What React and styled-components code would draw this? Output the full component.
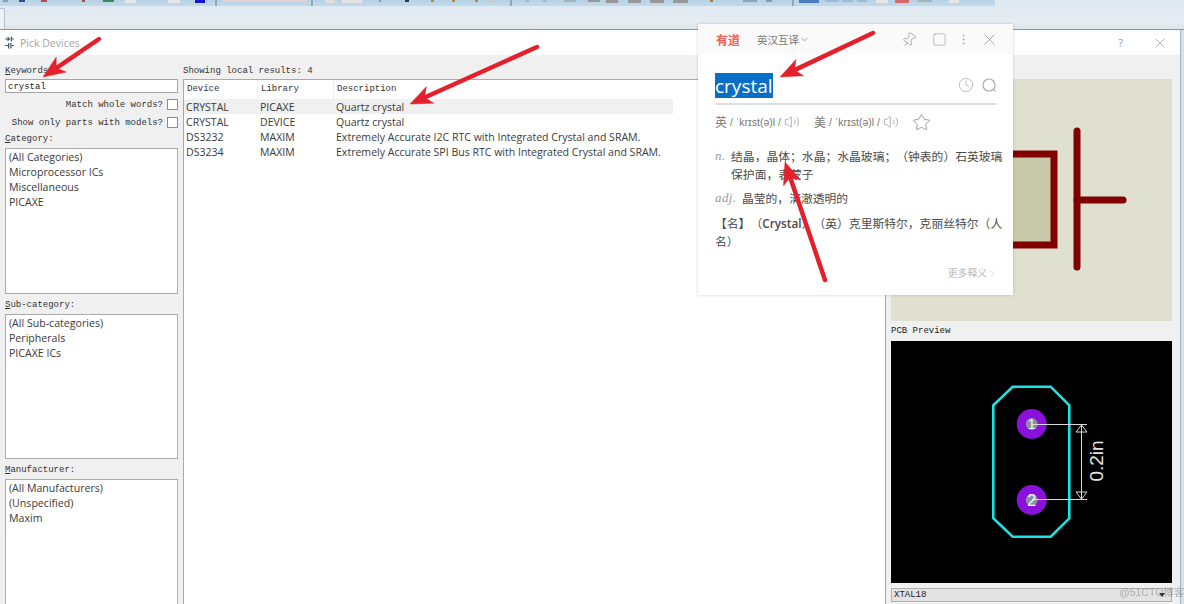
import React from "react";
import styled, { createGlobalStyle } from "styled-components";
import { ChevronDown, ChevronRight, Clock, EllipsisVertical, Pin, Square, Star, Volume2, X } from "lucide-react";

const GlobalStyle = createGlobalStyle`
  html, body { margin: 0; padding: 0; background: #d9dfe4; }
  * { box-sizing: border-box; }
`;

const ui = `"Open Sans", "Noto Sans CJK SC", sans-serif`;
const mono = `"Liberation Mono", monospace`;

const Page = styled.div`
  position: relative;
  width: 1184px;
  height: 604px;
  overflow: hidden;
  display: flex;
  flex-direction: column;
  font-family: ${ui};
  filter: blur(0.3px);
`;

/* the app toolbar, only its bottom few pixels are on screen */
const Toolbar = styled.div`
  height: 6px;
  flex: none;
  display: flex;
  background: #dfe9f1;
`;
const ToolStrip = styled.div`
  width: 995px;
  height: 6px;
  display: flex;
  align-items: flex-start;
  background: linear-gradient(180deg, #b6d1e5, #c3dbeb);
`;
const Chip = styled.span`
  flex: none;
  width: ${p => p.$w}px;
  height: ${p => p.$h || 2}px;
  margin-left: ${p => p.$gap}px;
  background: ${p => p.$c};
`;

const TabBand = styled.div`
  height: 24px;
  flex: none;
  padding-top: 2px;
  background: linear-gradient(180deg, #dfe9f1, #e6edf3 70%, #dbe5ec);
  border-bottom: 1px solid #7d9cb3;
`;
const DocTab = styled.div`
  width: 5px;
  height: 21px;
  background: #edf2f6;
  border: 1px solid #b3c0cb;
  border-left: 0;
  border-bottom: 0;
  border-top-right-radius: 2px;
`;

const Dialog = styled.div`
  flex: 1;
  min-height: 0;
  margin-right: 3px;
  display: flex;
  flex-direction: column;
  background: #f0f0f0;
  border-right: 1px solid #9fb3c3;
`;
const TitleBar = styled.div`
  height: 25px;
  flex: none;
  display: flex;
  align-items: center;
  padding: 0 12px 0 5px;
  background: #fff;
`;
const DialogName = styled.span`
  margin-left: 6px;
  font-size: 10.5px;
  color: #a4a4a4;
`;
const TitleRight = styled.div`
  margin-left: auto;
  display: flex;
  align-items: center;
  gap: 29px;
  color: #999;
`;
const HelpMark = styled.span`
  font-size: 11px;
  color: #999;
`;

const DialogBody = styled.div`
  flex: 1;
  min-height: 0;
  display: flex;
  overflow: hidden;
`;

const LeftColumn = styled.div`
  width: 173px;
  margin-left: 5px;
  padding-top: 9px;
  flex: none;
`;
const FieldLabel = styled.div`
  height: 12px;
  font: 9px/14px ${mono};
  color: #333;
`;
const KeywordInput = styled.div`
  height: 14px;
  margin-top: 3px;
  padding-left: 2px;
  background: #fff;
  border: 1px solid #a5a5a5;
  font: 9px/14px ${mono};
  color: #222;
`;
const OptionRows = styled.div`
  margin: 2px 0 1px;
`;
const OptionRow = styled.div`
  height: 18px;
  display: flex;
  align-items: center;
  justify-content: flex-end;
  gap: 4px;
`;
const OptionText = styled.span`
  padding-top: 2px;
  font: 9px/14px ${mono};
  color: #333;
`;
const CheckBox = styled.span`
  width: 11px;
  height: 11px;
  background: #fff;
  border: 1px solid #8e8e8e;
`;
const ListBox = styled.div`
  height: ${p => p.$h}px;
  margin: 4px 0;
  padding: 1px 0 0 3px;
  background: #fff;
  border: 1px solid #ababab;
`;
const ListItem = styled.div`
  height: 15px;
  font-size: 10.6px;
  line-height: 15px;
  color: #3a3a3a;
  white-space: nowrap;
`;

const ResultsColumn = styled.div`
  width: 703px;
  margin-left: 5px;
  padding-top: 9px;
  flex: none;
  display: flex;
  flex-direction: column;
`;
const ResultsFrame = styled.div`
  flex: 1;
  margin-top: 3px;
  background: #fff;
  border: 1px solid #a9a9a9;
  border-bottom: 0;
`;
const HeaderRow = styled.div`
  height: 19px;
  display: grid;
  grid-template-columns: 74px 76px 339px;
  width: 489px;
`;
const HeaderCell = styled.div`
  padding-left: 3px;
  font: 9px/19px ${mono};
  color: #333;
  border-right: 1px solid #ececec;
  &:last-child { border-right: 0; }
`;
const ResultRow = styled.div`
  height: 15px;
  width: 489px;
  display: grid;
  grid-template-columns: 74px 76px 339px;
  background: ${p => (p.$active ? "#f0f0f0" : "transparent")};
`;
const ResultCell = styled.div`
  padding-left: 2px;
  font-size: 10.55px;
  line-height: 16px;
  color: #3a3a3a;
  white-space: nowrap;
`;

const PreviewColumn = styled.div`
  width: 281px;
  margin-left: 5px;
  padding-top: 24px;
  flex: none;
`;
const SchematicBox = styled.div`
  height: 242px;
  background: #e0e0d1;
`;
const PcbLabel = styled.div`
  height: 20px;
  font: 9px/21px ${mono};
  color: #222;
`;
const PcbBox = styled.div`
  height: 242px;
  background: #000;
`;
const PackageSelect = styled.div`
  height: 14px;
  margin-top: 5px;
  padding: 0 6px 0 2px;
  display: flex;
  align-items: center;
  justify-content: space-between;
  background: #e3e3e3;
  border: 1px solid #b0b0b0;
  font: 9px/14px ${mono};
  color: #222;
`;
const SelectCaret = styled.span`
  width: 0;
  height: 0;
  border-left: 3px solid transparent;
  border-right: 3px solid transparent;
  border-top: 4px solid #222;
`;
const Drawing = styled.svg`
  display: block;
`;

/* dictionary popup floats over the dialog */
const Popup = styled.div`
  position: absolute;
  left: 698px;
  top: 24px;
  width: 315px;
  height: 271px;
  background: #fff;
  box-shadow: 0 0 3px rgba(0, 0, 0, 0.18);
  font-family: ${ui};
  text-spacing-trim: space-all;
`;
const PopupHead = styled.div`
  height: 31px;
  display: flex;
  align-items: center;
  padding: 0 14px 0 18px;
  background: #fafafa;
`;
const Brand = styled.span`
  font-size: 12px;
  font-weight: 700;
  color: #f2605c;
`;
const ModeSwitch = styled.span`
  margin-left: 17px;
  display: flex;
  align-items: center;
  font-size: 10.5px;
  color: #777;
`;
const HeadIcons = styled.div`
  margin-left: auto;
  display: flex;
  align-items: center;
  gap: 10px;
  color: #999;
`;
const SearchRow = styled.div`
  height: 50px;
  margin: 0 16px 0 17px;
  display: flex;
  align-items: center;
  justify-content: space-between;
  border-bottom: 2px solid #dedede;
`;
const Selected = styled.span`
  height: 25px;
  margin-top: 18px;
  align-self: flex-start;
  background: #0a6ec7;
  color: #fff;
  font-size: 19px;
  line-height: 26px;
`;
const SearchIcons = styled.div`
  margin-top: 12px;
  display: flex;
  align-items: center;
  gap: 8px;
  color: #aaa;
`;
const PhoneticRow = styled.div`
  height: 18px;
  margin: 8px 0 0 17px;
  display: flex;
  align-items: center;
  color: #888;
`;
const PhonLang = styled.span`
  font-size: 12px;
  color: #777;
`;
const PhonText = styled.span`
  margin: 0 3px 0 3px;
  font: 10.5px "Liberation Sans", sans-serif;
  color: #777;
  white-space: nowrap;
`;
const PhonEntry = styled.div`
  display: flex;
  align-items: center;
  width: ${p => p.$w}px;
  flex: none;
`;
const Defs = styled.div`
  margin: 16px 8px 0 17px;
`;
const DefLine = styled.div`
  display: flex;
  margin-bottom: ${p => p.$gap}px;
  font-size: 11.8px;
  line-height: 18px;
  color: #4a4a4a;
`;
const PartOfSpeech = styled.i`
  flex: none;
  margin-right: 5.5px;
  font: italic 13px/18px "Liberation Serif", serif;
  letter-spacing: 0.4px;
  color: #999;
`;
const BoldName = styled.b`
  font-weight: 600;
`;
const MoreLink = styled.div`
  position: absolute;
  right: 15px;
  bottom: 15px;
  display: flex;
  align-items: center;
  font-size: 9.8px;
  color: #bbb;
`;

const ArrowLayer = styled.svg`
  position: absolute;
  left: 0;
  top: 0;
  pointer-events: none;
`;
const Watermark = styled.div`
  position: absolute;
  left: 1119px;
  top: 585px;
  font: 10.5px/14px "Liberation Sans", "Noto Sans CJK SC", sans-serif;
  color: rgba(120, 120, 120, 0.5);
  white-space: nowrap;
`;

const toolChips = [
  [3, 5, "#9a9a9a"], [11, 6, "#2d4f8a"], [16, 6, "#c0444c"], [35, 3, "#9a5a3a"], [18, 11, "#3a8a5c"],
  [11, 11, "#e8e8e8", 3], [32, 12, "#e8e8e8", 3], [15, 10, "#1616d8", 3], [10, 2, "#8fa8b8", 6],
  [6, 84, "#e3d2cf", 2], [4, 2, "#8fa8b8", 6], [12, 10, "#dedede", 3], [7, 20, "#e4e4e4", 3],
  [17, 2, "#8a9aa5"], [24, 4, "#243a66", 2], [22, 3, "#b8863c"], [18, 3, "#b8863c"], [20, 3, "#b8863c"],
  [9, 10, "#c4ccd0", 2], [13, 2, "#8fa8b8", 6], [14, 3, "#a5b3bc"], [14, 3, "#a5b3bc"], [18, 12, "#a5b3bc"],
  [12, 12, "#999", 2], [6, 12, "#999", 3], [10, 13, "#999", 3], [9, 14, "#999", 3], [9, 15, "#999", 3],
  [22, 3, "#b07a3c"], [30, 14, "#90a4b0"], [9, 6, "#8a9aa5"], [20, 2, "#8fa8b8", 6],
  [5, 20, "#4a7ac0", 3], [6, 14, "#9dbbd4"], [3, 11, "#9dbbd4"], [4, 10, "#9dbbd4"],
  [9, 12, "#e8e8e8", 3], [7, 14, "#d86a6a", 3], [9, 14, "#a5b3bc"], [17, 10, "#e8e8e8", 3],
];

const ArrowShape = ({ from, to }) => {
  // shaft + head, head size fixed like the marker tool in the original
  const dx = to[0] - from[0];
  const dy = to[1] - from[1];
  const len = Math.hypot(dx, dy);
  const ux = dx / len;
  const uy = dy / len;
  const backX = to[0] - ux * 22;
  const backY = to[1] - uy * 22;
  const neckX = to[0] - ux * 16;
  const neckY = to[1] - uy * 16;
  const head = [
    to,
    [backX - uy * 9, backY + ux * 9],
    [neckX, neckY],
    [backX + uy * 9, backY - ux * 9],
  ].map(p => p.join(",")).join(" ");
  return (
    <g fill="#e3202b" stroke="#e3202b">
      <line x1={from[0]} y1={from[1]} x2={neckX} y2={neckY} strokeWidth="4.5" strokeLinecap="round" />
      <polygon points={head} strokeWidth="0.5" />
    </g>
  );
};

const DeviceGlyph = () => (
  <Drawing width="9" height="13" viewBox="0 0 9 13">
    <g fill="#3f5f7d">
      <path d="M0 2.5h2.5V0.5l3 2.5-3 2.5v-2H0z" />
      <rect x="5.8" y="0.5" width="1.2" height="5" />
      <rect x="7" y="2.5" width="2" height="1" />
      <rect x="0" y="9" width="3" height="1" />
      <rect x="3" y="7" width="1.3" height="5.5" />
      <rect x="5.3" y="7" width="1.3" height="5.5" />
      <rect x="6.6" y="9" width="2.4" height="1" />
    </g>
  </Drawing>
);

const CapacitorPreview = () => (
  <Drawing width="281" height="242" viewBox="0 0 281 242">
    <rect x="40" y="75" width="123" height="91" fill="#c8c8aa" stroke="#800000" strokeWidth="7" />
    <line x1="186" y1="52" x2="186" y2="188" stroke="#800000" strokeWidth="7" strokeLinecap="round" />
    <line x1="186" y1="121" x2="232" y2="121" stroke="#800000" strokeWidth="7" strokeLinecap="round" />
  </Drawing>
);

const PcbFootprint = () => (
  <Drawing width="281" height="242" viewBox="0 0 281 242">
    <polygon
      points="121.7,45.7 159.7,45.7 178.3,64.3 178.3,177.3 159.7,195.7 121.7,195.7 102.3,177.3 102.3,64.3"
      fill="none"
      stroke="#1ce4e4"
      strokeWidth="2.6"
    />
    <circle cx="140.7" cy="83" r="15" fill="#8a10dc" />
    <circle cx="140.7" cy="159" r="15" fill="#8a10dc" />
    <circle cx="140.7" cy="83" r="6" fill="#8e8e9a" />
    <circle cx="140.7" cy="159" r="6" fill="#8e8e9a" />
    <g fill="none" stroke="#d8d8d8" strokeWidth="1">
      <line x1="141" y1="83.5" x2="196" y2="83.5" />
      <line x1="141" y1="158.5" x2="196" y2="158.5" />
      <line x1="190.5" y1="84" x2="190.5" y2="158" />
      <polygon points="190.5,84 185,91 196,91" />
      <polygon points="190.5,158 185,151 196,151" />
    </g>
    <text x="140.7" y="88" textAnchor="middle" fontSize="14" fontFamily="Liberation Sans" fill="#dff">1</text>
    <text x="140.7" y="165" textAnchor="middle" fontSize="16" fontFamily="Liberation Sans" fill="#dff">2</text>
    <text
      transform="translate(212 120) rotate(-90)"
      textAnchor="middle"
      fontSize="19"
      fontFamily="Liberation Sans"
      fill="#e4e4e4"
    >
      0.2in
    </text>
  </Drawing>
);

const SearchGlyph = () => (
  <Drawing width="15" height="15" viewBox="0 0 15 15" fill="none" stroke="currentColor" strokeWidth="1.2">
    <circle cx="7" cy="7" r="6" />
    <line x1="11.3" y1="11.3" x2="13.5" y2="13.5" />
  </Drawing>
);

const categories = ["(All Categories)", "Microprocessor ICs", "Miscellaneous", "PICAXE"];
const subCategories = ["(All Sub-categories)", "Peripherals", "PICAXE ICs"];
const manufacturers = ["(All Manufacturers)", "(Unspecified)", "Maxim"];
const results = [
  ["CRYSTAL", "PICAXE", "Quartz crystal"],
  ["CRYSTAL", "DEVICE", "Quartz crystal"],
  ["DS3232", "MAXIM", "Extremely Accurate I2C RTC with Integrated Crystal and SRAM."],
  ["DS3234", "MAXIM", "Extremely Accurate SPI Bus RTC with Integrated Crystal and SRAM."],
];

export default function App() {
  return (
    <Page>
      <GlobalStyle />
      <Toolbar>
        <ToolStrip>
          {toolChips.map(([gap, w, c, h], i) => (
            <Chip key={i} $gap={gap} $w={w} $c={c} $h={h} />
          ))}
        </ToolStrip>
      </Toolbar>
      <TabBand>
        <DocTab />
      </TabBand>

      <Dialog>
        <TitleBar>
          <DeviceGlyph />
          <DialogName>Pick Devices</DialogName>
          <TitleRight>
            <HelpMark>?</HelpMark>
            <X size={16} strokeWidth={1} />
          </TitleRight>
        </TitleBar>

        <DialogBody>
          <LeftColumn>
            <FieldLabel><u>K</u>eywords:</FieldLabel>
            <KeywordInput>crystal</KeywordInput>
            <OptionRows>
              <OptionRow><OptionText>Match whole words?</OptionText><CheckBox /></OptionRow>
              <OptionRow><OptionText>Show only parts with models?</OptionText><CheckBox /></OptionRow>
            </OptionRows>
            <FieldLabel><u>C</u>ategory:</FieldLabel>
            <ListBox $h={146}>
              {categories.map(c => <ListItem key={c}>{c}</ListItem>)}
            </ListBox>
            <FieldLabel><u>S</u>ub-category:</FieldLabel>
            <ListBox $h={145}>
              {subCategories.map(c => <ListItem key={c}>{c}</ListItem>)}
            </ListBox>
            <FieldLabel><u>M</u>anufacturer:</FieldLabel>
            <ListBox $h={146}>
              {manufacturers.map(c => <ListItem key={c}>{c}</ListItem>)}
            </ListBox>
          </LeftColumn>

          <ResultsColumn>
            <FieldLabel>Showing local results: 4</FieldLabel>
            <ResultsFrame>
              <HeaderRow>
                <HeaderCell>Device</HeaderCell>
                <HeaderCell>Library</HeaderCell>
                <HeaderCell>Description</HeaderCell>
              </HeaderRow>
              {results.map((r, i) => (
                <ResultRow key={r[0] + r[1]} $active={i === 0}>
                  <ResultCell>{r[0]}</ResultCell>
                  <ResultCell>{r[1]}</ResultCell>
                  <ResultCell>{r[2]}</ResultCell>
                </ResultRow>
              ))}
            </ResultsFrame>
          </ResultsColumn>

          <PreviewColumn>
            <SchematicBox>
              <CapacitorPreview />
            </SchematicBox>
            <PcbLabel>PCB Preview</PcbLabel>
            <PcbBox>
              <PcbFootprint />
            </PcbBox>
            <PackageSelect>
              XTAL18
              <SelectCaret />
            </PackageSelect>
          </PreviewColumn>
        </DialogBody>
      </Dialog>

      <Popup>
        <PopupHead>
          <Brand>有道</Brand>
          <ModeSwitch>英汉互译<ChevronDown size={11} strokeWidth={1.4} /></ModeSwitch>
          <HeadIcons>
            <Pin size={16} strokeWidth={1.1} style={{ transform: "rotate(35deg)" }} />
            <Square size={15} strokeWidth={1} style={{ marginLeft: 5 }} />
            <EllipsisVertical size={13} strokeWidth={1.2} />
            <X size={19} strokeWidth={1} />
          </HeadIcons>
        </PopupHead>

        <SearchRow>
          <Selected>crystal</Selected>
          <SearchIcons>
            <Clock size={16} strokeWidth={1.1} />
            <SearchGlyph />
          </SearchIcons>
        </SearchRow>

        <PhoneticRow>
          <PhonEntry $w={99}>
            <PhonLang>英</PhonLang>
            <PhonText>/ ˈkrɪst(ə)l /</PhonText>
            <Volume2 size={16} strokeWidth={1} />
          </PhonEntry>
          <PhonEntry $w={98}>
            <PhonLang>美</PhonLang>
            <PhonText>/ ˈkrɪst(ə)l /</PhonText>
            <Volume2 size={16} strokeWidth={1} />
          </PhonEntry>
          <Star size={19} strokeWidth={1} />
        </PhoneticRow>

        <Defs>
          <DefLine $gap={6}>
            <PartOfSpeech>n.</PartOfSpeech>
            <span>结晶，晶体；水晶；水晶玻璃；（钟表的）石英玻璃保护面，表蒙子</span>
          </DefLine>
          <DefLine $gap={7}>
            <PartOfSpeech>adj.</PartOfSpeech>
            <span>晶莹的，清澈透明的</span>
          </DefLine>
          <DefLine $gap={0}>
            <span>【名】（<BoldName>Crystal</BoldName>）（英）克里斯特尔，克丽丝特尔（人名）</span>
          </DefLine>
        </Defs>

        <MoreLink>更多释义<ChevronRight size={11} strokeWidth={1.2} /></MoreLink>
      </Popup>

      <ArrowLayer width="1184" height="604" viewBox="0 0 1184 604">
        <ArrowShape from={[99, 39]} to={[43, 77]} />
        <ArrowShape from={[537, 47]} to={[410, 104]} />
        <ArrowShape from={[873, 33]} to={[780, 77]} />
        <ArrowShape from={[825, 280]} to={[785, 162]} />
      </ArrowLayer>

      <Watermark>@51CTO博客</Watermark>
    </Page>
  );
}
